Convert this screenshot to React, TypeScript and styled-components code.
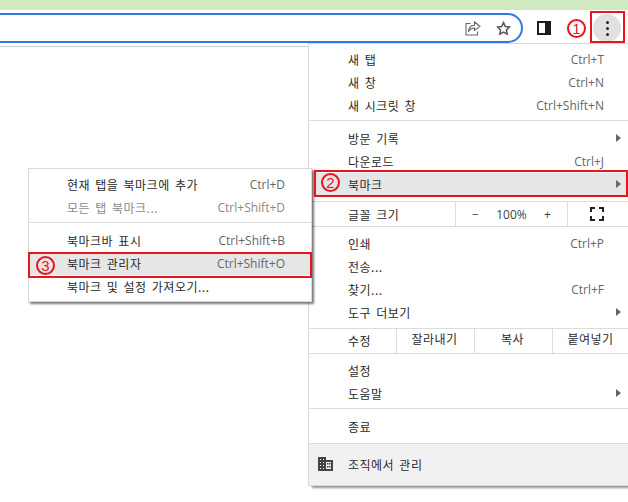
import React from "react";
import styled, { createGlobalStyle } from "styled-components";

const GlobalStyle = createGlobalStyle`
  html, body {
    margin: 0;
    padding: 0;
    background: #fff;
    overflow: hidden;
  }
  body {
    width: 628px;
    height: 502px;
    font-family: "Noto Sans CJK KR", "Noto Sans", sans-serif;
    font-size: 12px;
    color: #2a2a2a;
  }
`;

const Page = styled.div`
  position: relative;
  width: 628px;
  height: 502px;
  overflow: hidden;
`;

const TopBand = styled.div`
  height: 10px;
  background: #cfe9c1;
`;

const Toolbar = styled.div`
  display: flex;
  height: 33px;
  padding-top: 3px;
  border-bottom: 1px solid #c9d0d0;
`;

const Omnibox = styled.div`
  display: flex;
  align-items: center;
  justify-content: flex-end;
  gap: 15px;
  box-sizing: border-box;
  width: 543px;
  height: 30px;
  margin-left: -20px;
  padding-right: 10px;
  border: 2px solid #3078e4;
  border-radius: 15px;
`;

const PanelIcon = styled.div`
  box-sizing: border-box;
  width: 14px;
  height: 14px;
  margin: 8px 0 0 14px;
  border: 2px solid #1c1c1c;
  border-right-width: 6px;
`;

const MenuDots = styled.div`
  display: flex;
  flex-direction: column;
  align-items: center;
  justify-content: center;
  gap: 3px;
  width: 28px;
  height: 28px;
  margin: 1px 0 0 42px;
  border-radius: 50%;
  background: #e1e1e1;
`;

const Dot = styled.span`
  width: 3px;
  height: 3px;
  border-radius: 50%;
  background: #222;
`;

const MainMenu = styled.div`
  position: absolute;
  left: 308px;
  top: 43px;
  width: 322px;
  height: 443px;
  box-sizing: border-box;
  padding-top: 4px;
  background: #fff;
  border: 1px solid #dadada;
  border-right: 0;
  box-shadow: 4px 2px 2px rgba(60, 60, 60, 0.55);
  display: flex;
  flex-direction: column;
`;

const SubMenu = styled.div`
  position: absolute;
  left: 28px;
  top: 168px;
  width: 284px;
  height: 134px;
  box-sizing: border-box;
  padding-top: 4px;
  background: #fff;
  border: 1px solid #dadada;
  box-shadow: 2px 2px 2px rgba(50, 50, 50, 0.65);
  display: flex;
  flex-direction: column;
  z-index: 2;
`;

const Row = styled.div<{ $active?: boolean; $sub?: boolean }>`
  display: flex;
  align-items: center;
  flex: none;
  height: 23px;
  line-height: 23px;
  padding: 0 26px 0 ${(p) => (p.$sub ? "38px" : "39px")};
  background: ${(p) => (p.$active ? "#e6e6e6" : "transparent")};
  position: relative;
`;

const Label = styled.span<{ $disabled?: boolean }>`
  flex: 1;
  letter-spacing: 0.5px;
  word-spacing: 2px;
  white-space: nowrap;
  color: ${(p) => (p.$disabled ? "#8a8a8a" : "#2a2a2a")};
`;

const Shortcut = styled.span<{ $disabled?: boolean }>`
  font-family: "Open Sans", "Noto Sans", sans-serif;
  font-size: 12px;
  white-space: nowrap;
  color: ${(p) => (p.$disabled ? "#8a8a8a" : "#666")};
`;

const Arrow = styled.span`
  position: absolute;
  right: 9px;
  top: 7px;
  width: 0;
  height: 0;
  border-left: 5px solid #666;
  border-top: 4px solid transparent;
  border-bottom: 4px solid transparent;
`;

const Separator = styled.div<{ $before?: number; $after?: number }>`
  flex: none;
  height: 1px;
  background: #dcdcdc;
  margin: ${(p) => p.$before ?? 3}px 0 ${(p) => p.$after ?? 6}px;
`;

const SplitRow = styled.div`
  display: flex;
  flex: none;
  height: 24px;
  align-items: stretch;
`;

const RowLabel = styled.div<{ $width: number; $lift?: number }>`
  flex: none;
  box-sizing: border-box;
  width: ${(p) => p.$width}px;
  padding-left: 39px;
  line-height: ${(p) => 25 - (p.$lift ?? 0)}px;
  letter-spacing: 0.5px;
  word-spacing: 2px;
`;

const Cell = styled.div<{ $width: number }>`
  flex: none;
  display: flex;
  align-items: center;
  justify-content: center;
  box-sizing: border-box;
  width: ${(p) => p.$width}px;
  border-left: 1px solid #dcdcdc;
  letter-spacing: 0.5px;
  padding: 0 2px 5px 0;
`;

const ZoomControls = styled(Cell)`
  justify-content: space-between;
  padding: 0 16px 0 16px;
  font-family: "Open Sans", "Noto Sans", sans-serif;
  letter-spacing: 0;
  color: #444;
`;

const FullscreenCell = styled(Cell)`
  padding: 0 4px 0 0;
`;

const FooterRow = styled.div`
  flex: 1;
  display: flex;
  align-items: center;
  gap: 15px;
  padding: 0 0 1px 9px;
  background: #f1f1f1;
`;

const Highlight = styled.div<{ $left: number; $top: number; $width: number; $height: number }>`
  position: absolute;
  left: ${(p) => p.$left}px;
  top: ${(p) => p.$top}px;
  width: ${(p) => p.$width}px;
  height: ${(p) => p.$height}px;
  box-sizing: border-box;
  border: 2px solid #e8141f;
  z-index: 3;
`;

const Badge = styled.span<{ $left: number; $top: number }>`
  position: absolute;
  left: ${(p) => p.$left}px;
  top: ${(p) => p.$top}px;
  display: flex;
  align-items: center;
  justify-content: center;
  box-sizing: border-box;
  width: 19px;
  height: 19px;
  border: 2px solid #e8141f;
  border-radius: 50%;
  color: #e8141f;
  font-family: "Liberation Sans", sans-serif;
  font-size: 15px;
  line-height: 1;
  z-index: 4;
`;

const ShareIcon = () => (
  <svg width="16" height="15" viewBox="0 0 16 15" fill="none" stroke="#666" strokeWidth="1.1">
    <path d="M5.5 2.5H1v11.5h11.5v-3.5" />
    <path d="M9.5 1l5.5 4.3-5.5 4.2V7C6.5 7 4.5 8.2 3.5 11c0-4 2.5-6.6 6-6.8z" />
  </svg>
);

const StarIcon = () => (
  <svg width="15" height="15" viewBox="0 0 15 15" fill="none" stroke="#555" strokeWidth="1.5">
    <path d="M7.5 1.6l1.8 3.9 4.2.5-3.1 2.9.8 4.2-3.7-2.1-3.7 2.1.8-4.2L1.5 6l4.2-.5z" />
  </svg>
);

const FullscreenIcon = () => (
  <svg width="14" height="14" viewBox="0 0 14 14" fill="none" stroke="#222" strokeWidth="2">
    <path d="M1 5V1h4M9 1h4v4M13 9v4H9M5 13H1V9" />
  </svg>
);

const BuildingIcon = () => (
  <svg width="15" height="14" viewBox="0 0 15 14">
    <path fill="#444" d="M0 0h8v3h7v11H0z" />
    <g fill="#f1f1f1">
      <path d="M2 2h1v1H2zM5 2h1v1H5zM2 5h1v1H2zM5 5h1v1H5zM2 8h1v1H2zM5 8h1v1H5zM2 11h1v1H2zM5 11h1v1H5z" />
      <path d="M8 5h5v7H8z" />
    </g>
    <path fill="#444" d="M9 6h1.500v1.500H9zM11 6h1.500v1.500H11zM9 9h1.500v1.500H9zM11 9h1.500v1.500H11z" />
  </svg>
);

type Item = { label: string; shortcut?: string; arrow?: boolean; active?: boolean; disabled?: boolean };

const MenuRow: React.FC<{ item: Item; sub?: boolean }> = ({ item, sub }) => (
  <Row $active={item.active} $sub={sub}>
    <Label $disabled={item.disabled}>{item.label}</Label>
    {item.shortcut && <Shortcut $disabled={item.disabled}>{item.shortcut}</Shortcut>}
    {item.arrow && <Arrow />}
  </Row>
);

const App: React.FC = () => (
  <Page>
    <GlobalStyle />
    <TopBand />
    <Toolbar>
      <Omnibox>
        <ShareIcon />
        <StarIcon />
      </Omnibox>
      <PanelIcon />
      <MenuDots>
        <Dot />
        <Dot />
        <Dot />
      </MenuDots>
    </Toolbar>

    <MainMenu>
      <MenuRow item={{ label: "새 탭", shortcut: "Ctrl+T" }} />
      <MenuRow item={{ label: "새 창", shortcut: "Ctrl+N" }} />
      <MenuRow item={{ label: "새 시크릿 창", shortcut: "Ctrl+Shift+N" }} />
      <Separator />
      <MenuRow item={{ label: "방문 기록", arrow: true }} />
      <MenuRow item={{ label: "다운로드", shortcut: "Ctrl+J" }} />
      <MenuRow item={{ label: "북마크", arrow: true, active: true }} />
      <Separator $before={5} $after={0} />
      <SplitRow>
        <RowLabel $width={146}>글꼴 크기</RowLabel>
        <ZoomControls $width={112}>
          <span>−</span>
          <span>100%</span>
          <span>+</span>
        </ZoomControls>
        <FullscreenCell $width={63}>
          <FullscreenIcon />
        </FullscreenCell>
      </SplitRow>
      <Separator $before={0} $after={5} />
      <MenuRow item={{ label: "인쇄", shortcut: "Ctrl+P" }} />
      <MenuRow item={{ label: "전송..." }} />
      <MenuRow item={{ label: "찾기...", shortcut: "Ctrl+F" }} />
      <MenuRow item={{ label: "도구 더보기", arrow: true }} />
      <Separator $before={4} $after={0} />
      <SplitRow>
        <RowLabel $width={87} $lift={1}>수정</RowLabel>
        <Cell $width={78}>잘라내기</Cell>
        <Cell $width={78}>복사</Cell>
        <Cell $width={78}>붙여넣기</Cell>
      </SplitRow>
      <Separator $before={0} $after={5} />
      <MenuRow item={{ label: "설정" }} />
      <MenuRow item={{ label: "도움말", arrow: true }} />
      <Separator $before={3} $after={6} />
      <MenuRow item={{ label: "종료" }} />
      <Separator $before={5} $after={0} />
      <FooterRow>
        <BuildingIcon />
        <Label>조직에서 관리</Label>
      </FooterRow>
    </MainMenu>

    <SubMenu>
      <MenuRow sub item={{ label: "현재 탭을 북마크에 추가", shortcut: "Ctrl+D" }} />
      <MenuRow sub item={{ label: "모든 탭 북마크...", shortcut: "Ctrl+Shift+D", disabled: true }} />
      <Separator $before={3} $after={6} />
      <MenuRow sub item={{ label: "북마크바 표시", shortcut: "Ctrl+Shift+B" }} />
      <MenuRow sub item={{ label: "북마크 관리자", shortcut: "Ctrl+Shift+O", active: true }} />
      <MenuRow sub item={{ label: "북마크 및 설정 가져오기..." }} />
    </SubMenu>

    <Highlight $left={590} $top={11} $width={35} $height={32} />
    <Highlight $left={314} $top={170} $width={314} $height={27} />
    <Highlight $left={28} $top={252} $width={284} $height={26} />
    <Badge $left={567} $top={19}>1</Badge>
    <Badge $left={321} $top={173}>2</Badge>
    <Badge $left={36} $top={256}>3</Badge>
  </Page>
);

export default App;
